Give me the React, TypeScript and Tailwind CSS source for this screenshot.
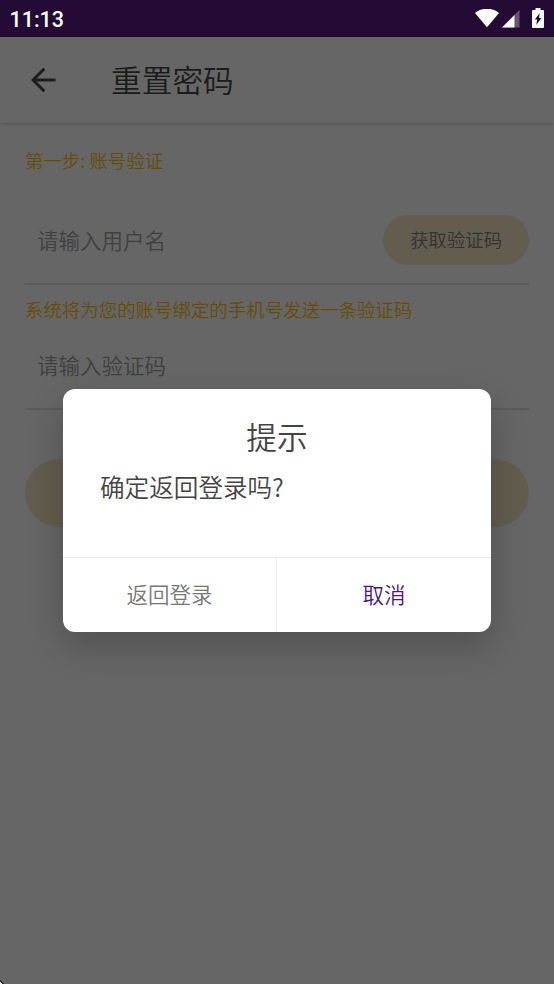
import { useState } from "react";

function StatusBar() {
  return (
    <div className="flex h-[37px] shrink-0 items-center justify-between bg-[#240b36] pl-[9.5px] pr-[10px] text-white">
      <span className="pt-[2px] font-[Roboto] text-[21.5px] leading-[35px] font-medium">11:13</span>
      <div className="flex items-center">
        {/* wifi */}
        <svg width="24" height="19" viewBox="0 0 24 19" fill="currentColor">
          <path d="M12 18.2 L0 4 C3.4 1.2 7.4 -0.2 12 -0.2 C16.6 -0.2 20.6 1.2 24 4 Z" />
        </svg>
        {/* signal */}
        <svg className="ml-[3.5px]" width="18" height="19" viewBox="0 0 18 19" fill="currentColor">
          <path d="M0 18.5 L17.5 0.8 V18.5 Z" fillOpacity="0.3" />
          <path d="M0 18.5 L12.5 5.9 V18.5 Z" />
        </svg>
        {/* battery */}
        <svg className="mb-px ml-[12px]" width="12" height="20" viewBox="0 0 12 20" fill="currentColor">
          <path
            fillRule="evenodd"
            d="M3.5 0 H8.5 V2 H11 Q12 2 12 3 V19 Q12 20 11 20 H1 Q0 20 0 19 V3 Q0 2 1 2 H3.5 Z M7.8 5 L2.8 11.5 H5.2 L4.2 17 L9.5 10 H7 Z"
          />
        </svg>
      </div>
    </div>
  );
}

export default function App() {
  const [showDialog, setShowDialog] = useState(true);

  return (
    <div className="flex h-[984px] w-[554px] flex-col overflow-hidden bg-white font-['Noto_Sans_CJK_SC',sans-serif] font-[350]">
      <StatusBar />

      <div className="relative flex-1 bg-white">
        {/* HEADER */}
        <header className="flex h-[86px] items-center bg-white pl-[31px] shadow-[0_1px_3px_rgba(0,0,0,0.2)]">
          <button className="text-[#484848]" onClick={() => setShowDialog(true)}>
            <svg width="26" height="26" viewBox="0 0 26 26" fill="none" stroke="currentColor" strokeWidth="3">
              <path d="M24.5 13 H2 M13.3 1.7 L2 13 L13.3 24.3" />
            </svg>
          </button>
          <h1 className="mb-[2px] ml-[54px] text-[30.7px] leading-[40px] text-[#484848]">重置密码</h1>
        </header>

        {/* FORM */}
        <main className="px-[25px] pt-[23px]">
          <p className="text-[18.46px] leading-[28px] text-[#ffc107]">第一步: 账号验证</p>

          <div className="mt-[41px] flex h-[70px] items-start justify-between border-b-2 border-[#e4e4e4]">
            <span className="pl-[12px] text-[21.5px] leading-[49px] text-[#a0a0a0]">请输入用户名</span>
            <button className="h-[50px] w-[146px] rounded-full bg-[#f5e9c4] text-[18.46px] text-[#808080]">
              获取验证码
            </button>
          </div>

          <p className="mt-[10px] text-[18.46px] leading-[28px] text-[#ffc107]">
            系统将为您的账号绑定的手机号发送一条验证码
          </p>

          <div className="mt-[17px] flex h-[70px] items-start border-b-2 border-[#e4e4e4]">
            <span className="pl-[12px] text-[21.5px] leading-[50px] text-[#a0a0a0]">请输入验证码</span>
          </div>

          <button className="mt-[49px] h-[68px] w-full rounded-full bg-[#f5e9c4]" />
        </main>

        {/* DIALOG */}
        {showDialog && (
          <div className="absolute inset-0 flex items-center justify-center bg-black/60">
            <div className="flex h-[243px] w-[428px] flex-col overflow-hidden rounded-[12px] bg-white shadow-[0_14px_36px_rgba(0,0,0,0.22)]">
              <h2 className="pt-[27px] text-center text-[30.7px] leading-[40px] text-[#444444]">提示</h2>
              <p className="flex-1 pt-[12px] pl-[37px] text-[24.6px] leading-[36px] text-[#444444]">
                确定返回登录吗?
              </p>
              <div className="flex h-[75px] border-t border-[#e8e8e8] text-[21.5px]">
                <button
                  className="w-[214px] border-r border-[#e8e8e8] pb-px text-[#777777]"
                  onClick={() => setShowDialog(false)}
                >
                  返回登录
                </button>
                <button className="flex-1 pb-px text-[#4a148c]" onClick={() => setShowDialog(false)}>
                  取消
                </button>
              </div>
            </div>
          </div>
        )}

        {/* window corner */}
        <svg className="absolute bottom-0 left-0" width="4" height="4" viewBox="0 0 4 4">
          <path d="M0 0 L4 4 H0 Z" fill="#000000" />
          <path d="M0 1.5 L2.5 4 H0 Z" fill="#ffffff" />
        </svg>
      </div>
    </div>
  );
}
